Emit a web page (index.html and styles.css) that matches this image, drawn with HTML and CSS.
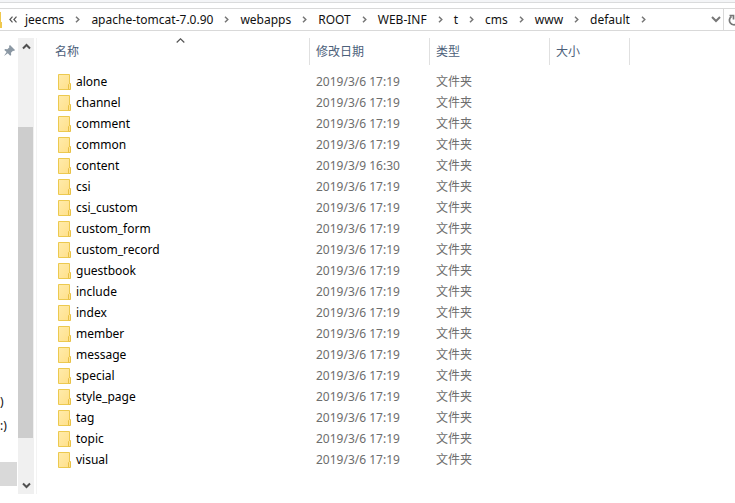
FILE: index.html
```html
<!DOCTYPE html>
<html lang="zh-CN">
<head>
<meta charset="utf-8">
<title>default</title>
<link rel="stylesheet" href="styles.css">
</head>
<body>
<svg class="defs" aria-hidden="true">
  <defs>
    <linearGradient id="paper" x1="0" y1="0" x2="1" y2="1"><stop offset="0" stop-color="#ffebab"/><stop offset="1" stop-color="#ffe08a"/></linearGradient>
  </defs>
  <symbol id="folder" viewBox="0 0 13 16">
    <path d="M.5.5h11v15H.5z" fill="url(#paper)" stroke="#ecc94f"/>
    <path d="M10.500 15.500v-5l1-1h1v6z" fill="#ffe28c" stroke="#e8c146"/>
  </symbol>
  <symbol id="next" viewBox="0 0 5 7"><path d="M1 .7l2.800 2.800L1 6.300" fill="none" stroke="#777" stroke-width="1.500"/></symbol>
</svg>
<header class="toolbar">
  <nav class="address" aria-label="路径">
    <svg class="address-folder" viewBox="0 0 2 16" aria-hidden="true"><path d="M0 0h1v10h1v6H0z" fill="#efc84e"/></svg>
    <svg class="overflow" viewBox="0 0 8 7" aria-hidden="true"><path d="M3.500.7L.9 3.500l2.600 2.800M7.500.7L4.900 3.500l2.600 2.800" fill="none" stroke="#555" stroke-width="1.200"/></svg>
    <ol class="crumbs"></ol>
    <button class="tool history" aria-label="以前的位置"><svg width="10" height="7" viewBox="0 0 10 7"><path d="M1 1l4 4 4-4" fill="none" stroke="#777" stroke-width="2"/></svg></button>
    <button class="tool refresh" aria-label="刷新"><svg width="12" height="12" viewBox="0 0 12 12"><path d="M3.500 2.500A4.500 4.500 0 1 0 9 3M1.500 1.500h4v4" fill="none" stroke="#777" stroke-width="1.700"/></svg></button>
  </nav>
</header>
<main class="explorer">
  <aside class="tree">
    <svg class="pin" viewBox="0 0 11 11" aria-hidden="true"><path d="M6 0l5 5-1 1-1-.3-2 2 .2 2.300-1 .8-2.400-2.500L0 11l2.600-3.900L.3 5l.8-1 2.300.2 2-2L5 1z" fill="#8b98a4"/></svg>
    <ul class="drives"><li>)</li><li>:)</li><li></li><li class="selected"></li></ul>
  </aside>
  <div class="scrollbar">
    <button class="arrow" aria-label="向上滚动"><svg width="9" height="7" viewBox="0 0 9 7"><path d="M1 5.500L4.500 2 8 5.500" fill="none" stroke="#505050" stroke-width="2"/></svg></button>
    <div class="before"></div><div class="thumb"></div><div class="after"></div>
    <button class="arrow" aria-label="向下滚动"><svg width="9" height="7" viewBox="0 0 9 7"><path d="M1 1.500L4.500 5 8 1.500" fill="none" stroke="#505050" stroke-width="2"/></svg></button>
  </div>
  <section class="files">
    <table>
      <colgroup><col class="col-name"><col class="col-date"><col class="col-type"><col class="col-size"><col></colgroup>
      <thead><tr>
        <th><button>名称<svg class="sort" viewBox="0 0 9 5" aria-hidden="true"><path d="M.7 4.500l3.800-3.700 3.800 3.700" fill="none" stroke="#555" stroke-width="1.200"/></svg></button></th>
        <th><button>修改日期</button></th><th><button>类型</button></th><th><button>大小</button></th><td></td>
      </tr></thead>
      <tbody></tbody>
    </table>
  </section>
</main>
<script src="script.js"></script>
</body>
</html>
```
FILE: styles.css
```css
* { box-sizing: border-box; }
body {
  margin: 0;
  min-height: 100vh;
  display: flex;
  flex-direction: column;
  background: #fff;
  color: #111;
  font: 12px/21px "Noto Sans", "Noto Sans CJK SC", sans-serif;
  overflow: hidden;
}
button { padding: 0; border: 0; background: none; font: inherit; color: inherit; }
ul, ol { margin: 0; padding: 0; list-style: none; }
svg { flex: none; }
.defs { position: absolute; width: 0; height: 0; }
.toolbar { border-top: 2px solid #f4f5f7; }
.toolbar::before { content: ""; display: block; height: 1px; margin-bottom: 5px; background: #dadbdc; }
.address { display: flex; align-items: center; height: 23px; border: solid #d9d9d9; border-width: 1px 0; }
.address-folder { width: 2px; height: 16px; }
.overflow { width: 8px; height: 7px; margin-left: 7px; }
.crumbs { display: flex; flex: 1; min-width: 0; margin-left: 8px; }
.crumbs li { display: flex; align-items: center; }
.crumbs a { color: inherit; text-decoration: none; }
.crumbs svg { width: 5px; height: 7px; margin: 0 11px; }
.tool { display: flex; flex: none; align-items: center; align-self: stretch; overflow: hidden; }
.history { padding-right: 2px; }
.refresh { width: 12px; padding-left: 4px; border-left: 1px solid #d9d9d9; }
.explorer { display: flex; flex: 1; padding: 7px 0 9px; }
.tree { display: flex; flex-direction: column; justify-content: space-between; width: 18px; padding: 7px 1px 8px 0; }
.pin { width: 11px; height: 11px; margin-left: 4px; }
.drives li { height: 24px; line-height: 24px; color: #111; }
.drives .selected { background: #d9d9d9; }
.scrollbar { display: flex; flex-direction: column; width: 16px; background: #f0f0f0; }
.arrow { display: flex; align-items: center; justify-content: center; height: 17px; }
.before { flex: 72; }
.thumb { flex: 311; margin-right: 1px; background: #cdcdcd; }
.after { flex: 39; }
.files { flex: 1; min-width: 0; margin-left: 2px; border-left: 1px solid #f3f3f3; }
table { width: 100%; table-layout: fixed; border-collapse: collapse; }
.col-name { width: 273px; }
.col-date, .col-type { width: 120px; }
.col-size { width: 80px; }
th { padding: 0 0 6px; font-weight: 400; text-align: left; }
th button { position: relative; display: block; width: 100%; height: 27px; padding-left: 6px; border-right: 1px solid #e0e0e0; color: #4c607a; text-align: left; }
th:first-child button { padding-left: 18px; }
.sort { position: absolute; top: 0; left: 51%; width: 9px; height: 5px; }
td { height: 21px; padding: 0 6px; color: #6d6d6d; }
.name { display: flex; align-items: center; gap: 5px; padding-left: 15px; color: #000; }
.name svg { width: 13px; height: 16px; }
```
FILE: script.js
```js
const path = ["jeecms", "apache-tomcat-7.0.90", "webapps", "ROOT", "WEB-INF", "t", "cms", "www", "default"];
const folders = ["alone", "channel", "comment", "common", "content", "csi", "csi_custom", "custom_form",
  "custom_record", "guestbook", "include", "index", "member", "message", "special", "style_page", "tag", "topic", "visual"];
const modified = { content: "2019/3/9 16:30" };

document.querySelector(".crumbs").innerHTML = path
  .map(p => `<li><a href="#">${p}</a><svg><use href="#next"/></svg></li>`).join("");
document.querySelector("tbody").innerHTML = folders
  .map(f => `<tr><td><div class="name"><svg><use href="#folder"/></svg>${f}</div></td><td>${modified[f] || "2019/3/6 17:19"}</td><td>文件夹</td></tr>`).join("");
```
